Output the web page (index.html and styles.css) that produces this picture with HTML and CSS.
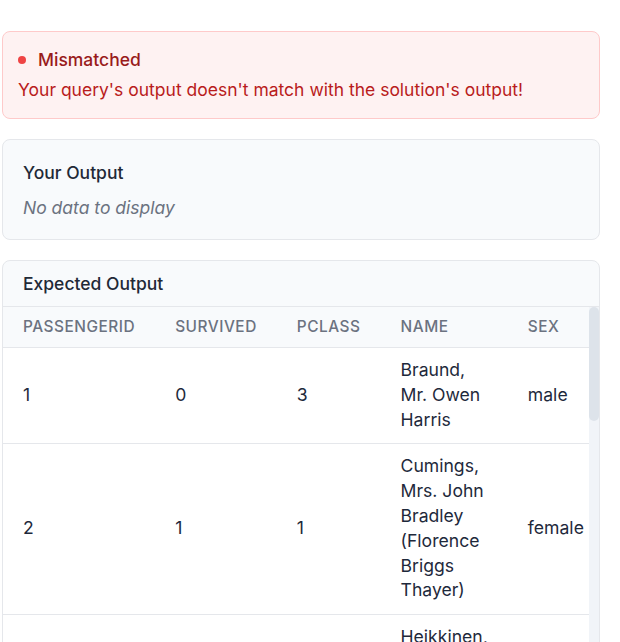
FILE: index.html
```html
<!DOCTYPE html>
<html lang="en">
<head>
<meta charset="utf-8">
<title>Result</title>
<link rel="stylesheet" href="styles.css">
</head>
<body>
<main class="results">
  <section class="alert">
    <div class="alert-title"><span class="dot"></span>Mismatched</div>
    <p class="alert-msg">Your query's output doesn't match with the solution's output!</p>
  </section>

  <section class="card card-padded">
    <h3 class="card-title">Your Output</h3>
    <p class="empty">No data to display</p>
  </section>

  <section class="card">
    <h3 class="card-head">Expected Output</h3>
    <div class="table-area">
      <div class="table-view">
        <table class="data">
          <thead>
            <tr><th>PassengerId</th><th>Survived</th><th>Pclass</th><th>Name</th><th>Sex</th><th>Age</th><th>SibSp</th><th>Parch</th><th>Ticket</th><th>Fare</th><th>Cabin</th><th>Embarked</th></tr>
          </thead>
          <tbody>
            <tr><td>1</td><td>0</td><td>3</td><td>Braund, Mr. Owen Harris</td><td>male</td><td>22</td><td>1</td><td>0</td><td>A/5 21171</td><td>7.25</td><td></td><td>S</td></tr>
            <tr><td>2</td><td>1</td><td>1</td><td>Cumings, Mrs. John Bradley (Florence Briggs Thayer)</td><td>female</td><td>38</td><td>1</td><td>0</td><td>PC 17599</td><td>71.2833</td><td>C85</td><td>C</td></tr>
            <tr><td>3</td><td>1</td><td>3</td><td>Heikkinen, Miss. Laina</td><td>female</td><td>26</td><td>0</td><td>0</td><td>STON/O2. 3101282</td><td>7.925</td><td></td><td>S</td></tr>
            <tr><td>4</td><td>1</td><td>1</td><td>Futrelle, Mrs. Jacques Heath (Lily May Peel)</td><td>female</td><td>35</td><td>1</td><td>0</td><td>113803</td><td>53.1</td><td>C123</td><td>S</td></tr>
            <tr><td>5</td><td>0</td><td>3</td><td>Allen, Mr. William Henry</td><td>male</td><td>35</td><td>0</td><td>0</td><td>373450</td><td>8.05</td><td></td><td>S</td></tr>
          </tbody>
        </table>
      </div>
      <div class="scrollbar" aria-hidden="true"><div class="thumb"></div></div>
    </div>
  </section>
</main>
</body>
</html>
```

FILE: styles.css
```css
* { box-sizing: border-box; }

html, body {
  margin: 0;
  background: #ffffff;
}

body {
  font-family: Inter, "Noto Sans", "Liberation Sans", sans-serif;
  font-size: 17.5px;
  line-height: 1.4;
  color: #1e293b;
}

.results {
  width: 598px;
  margin-left: 2px;
  padding-top: 31px;
  display: flex;
  flex-direction: column;
  gap: 20px;
}

.alert {
  background: #fef2f2;
  border: 1px solid #fecaca;
  border-radius: 8px;
  padding: 16px 15px 16px;
}

.alert-title {
  display: flex;
  align-items: center;
  gap: 12px;
  font-weight: 500;
  color: #991b1b;
}

.dot {
  width: 8px;
  height: 8px;
  border-radius: 50%;
  background: #ef4444;
  flex: none;
}

.alert-msg {
  margin: 5px 0 0;
  color: #b91c1c;
}

.card {
  background: #f8fafc;
  border: 1px solid #e5e7eb;
  border-radius: 8px;
  overflow: hidden;
}

.card-padded {
  padding: 21px 20px 19px;
}

.card-title {
  margin: 0;
  font-size: 17.5px;
  font-weight: 500;
  color: #1f2937;
}

.empty {
  margin: 10px 0 0;
  font-style: italic;
  color: #6b7280;
}

.card-head {
  margin: 0;
  padding: 11px 20px 9px;
  font-size: 17.5px;
  font-weight: 500;
  color: #1f2937;
  border-bottom: 1px solid #e5e7eb;
}

.table-area {
  display: flex;
  height: 400px;
}

.table-view {
  flex: 1;
  min-width: 0;
  overflow: hidden;
  background: #ffffff;
}

.scrollbar {
  flex: none;
  width: 10px;
  background: #f1f4f8;
}

.thumb {
  height: 114px;
  border-radius: 5px;
  background: #dde3ea;
}

.data {
  width: 100%;
  border-collapse: collapse;
}

.data th {
  background: #f8fafc;
  text-align: left;
  font-size: 15.4px;
  font-weight: 500;
  letter-spacing: 0.034em;
  text-transform: uppercase;
  color: #6b7280;
  line-height: 20px;
  padding: 10px 20px;
  border-bottom: 1px solid #e5e7eb;
  white-space: nowrap;
}

.data td {
  font-size: 17.6px;
  line-height: 24.8px;
  padding: 10.5px 20px;
  color: #1e293b;
  border-bottom: 1px solid #e5e7eb;
  vertical-align: middle;
}
```
